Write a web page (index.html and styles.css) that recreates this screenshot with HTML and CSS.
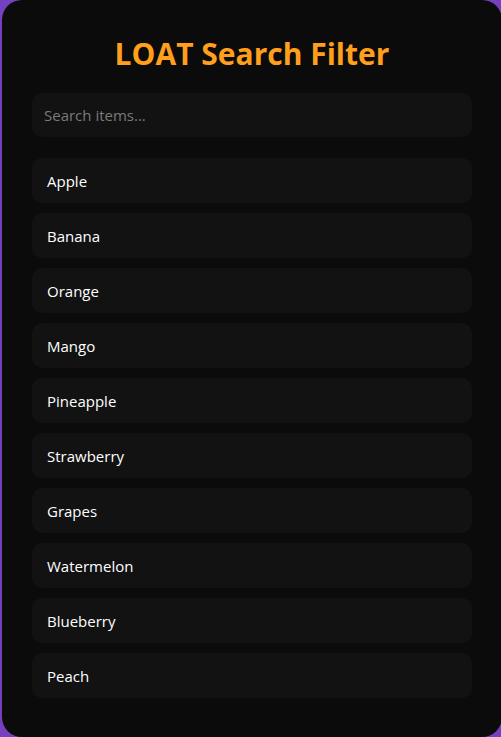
FILE: index.html
```html
<!DOCTYPE html>
<html lang="en">
<head>
<meta charset="utf-8">
<title>LOAT Search Filter</title>
<link rel="stylesheet" href="styles.css">
</head>
<body>
<main class="card">
  <h1 class="title">LOAT Search Filter</h1>
  <input class="search" type="text" placeholder="Search items...">
  <ul class="list">
    <li class="item">Apple</li>
    <li class="item">Banana</li>
    <li class="item">Orange</li>
    <li class="item">Mango</li>
    <li class="item">Pineapple</li>
    <li class="item">Strawberry</li>
    <li class="item">Grapes</li>
    <li class="item">Watermelon</li>
    <li class="item">Blueberry</li>
    <li class="item">Peach</li>
  </ul>
</main>
</body>
</html>
```

FILE: styles.css
```css
* { box-sizing: border-box; }
html, body { margin: 0; padding: 0; }
body {
  background: #7440bd;
  font-family: "Open Sans", "Noto Sans", sans-serif;
  overflow: hidden;
  height: 737px;
}
.card {
  margin-left: 2px;
  width: 500px;
  height: 737px;
  background: #0b0b0b;
  border-radius: 20px;
  padding: 34px 30px 30px;
  display: flex;
  flex-direction: column;
}
.title {
  margin: 0 0 19px;
  font-size: 30px;
  line-height: 40px;
  font-weight: 700;
  color: #ff9f1c;
  text-align: center;
}
.search {
  display: block;
  width: 100%;
  height: 44px;
  border: none;
  outline: none;
  border-radius: 10px;
  background: #121212;
  color: #fff;
  padding: 0 12px;
  font-family: inherit;
  font-size: 15px;
  margin: 0 0 21px;
}
.search::placeholder { color: #7a7a7a; }
.list {
  list-style: none;
  margin: 0;
  padding: 0;
  display: flex;
  flex-direction: column;
  gap: 10px;
}
.item {
  height: 45px;
  display: flex;
  align-items: center;
  padding: 0 15px;
  background: #121212;
  border-radius: 10px;
  color: #fff;
  font-size: 15px;
}
```
